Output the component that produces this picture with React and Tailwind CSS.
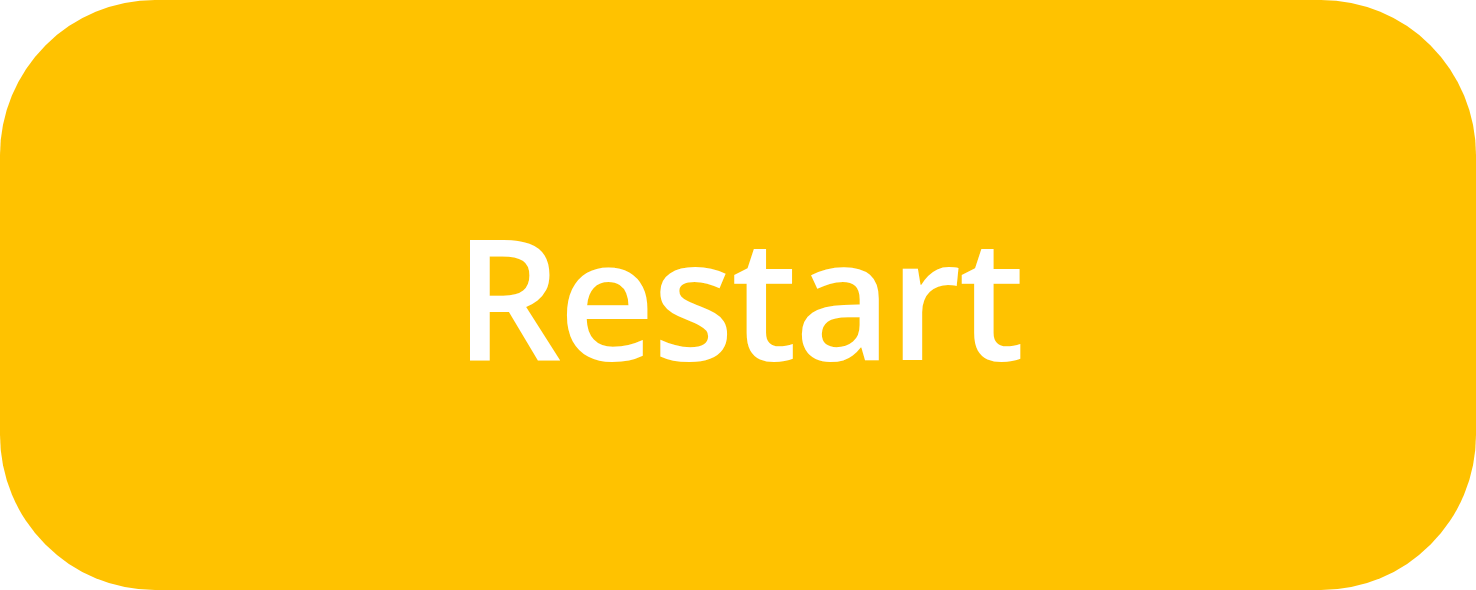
import React from 'react';

export default function App() {
  return (
    <div className="w-[1476px] h-[590px] bg-white">
      <button className="w-full h-full rounded-[155px] bg-[#ffc200] flex items-center justify-center text-white font-semibold text-[168px] leading-none font-['Open_Sans',sans-serif]">
        <span className="tracking-[-3px]">Restart</span>
      </button>
    </div>
  );
}
